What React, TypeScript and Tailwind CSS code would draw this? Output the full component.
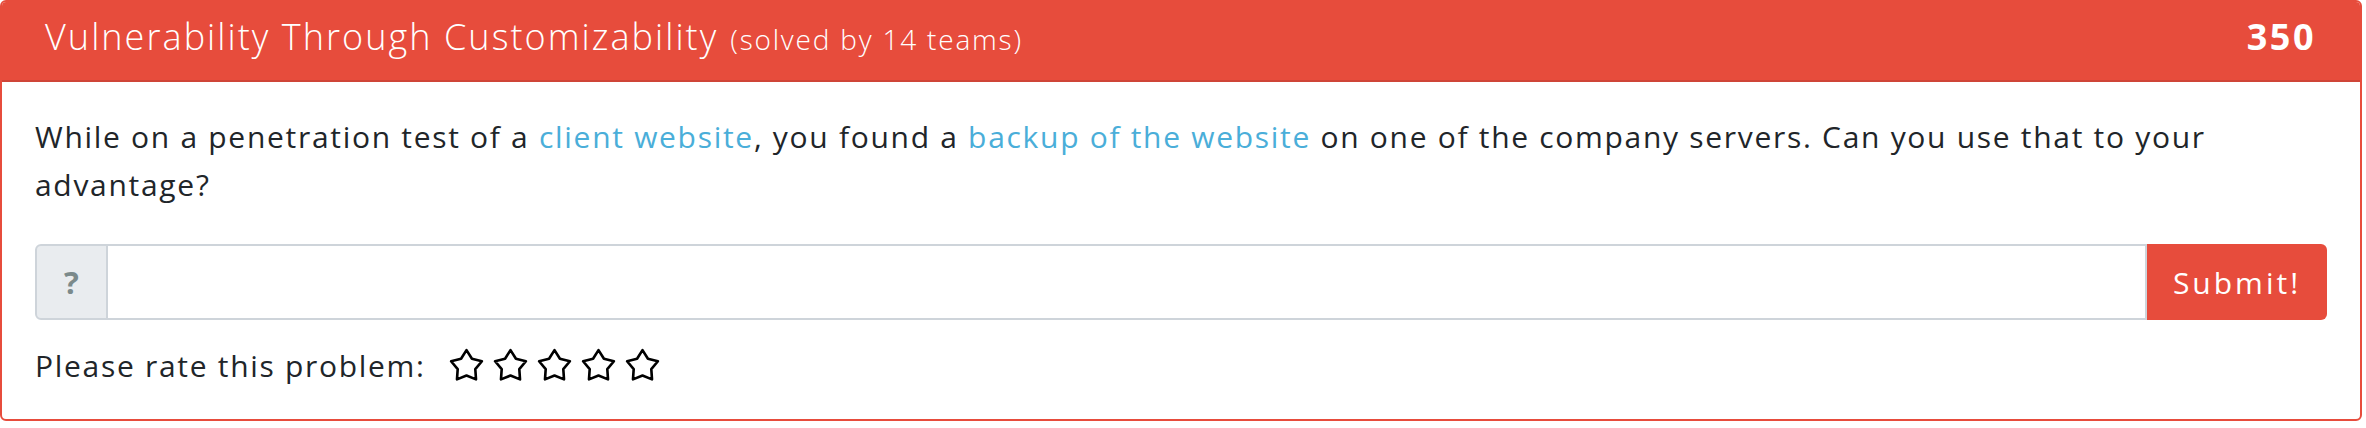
import React from "react";

function Star() {
  return (
    <svg width="37" height="37" viewBox="0 0 24 24" fill="none">
      <polygon
        points="12,2 15.53,7.65 21.99,9.26 17.71,14.35 18.17,21 12,18.5 5.83,21 6.29,14.35 2.01,9.26 8.47,7.65"
        stroke="#000"
        strokeWidth="1.7"
        strokeLinejoin="round"
      />
    </svg>
  );
}

export default function App() {
  return (
    <div className="bg-white w-[2366px] h-[428px] font-['Open_Sans',sans-serif]">
      <div className="w-[2362px] rounded-[6px] border-2 border-[#e74c3c] overflow-hidden bg-white">
        <div className="h-[80px] bg-[#e74c3c] border-b-2 border-[#cf4538] flex items-center justify-between pl-[43px] pr-[44px] pb-[9px] text-white">
          <div className="flex items-baseline">
            <span className="text-[36px] font-light tracking-[2.05px]">Vulnerability Through Customizability</span>
            <span className="text-[28px] font-light tracking-[1.8px] ml-[12px]">(solved by 14 teams)</span>
          </div>
          <span className="text-[36px] font-bold tracking-[2.5px]">350</span>
        </div>
        <div className="px-[33px] pt-[31px] pb-[30px]">
          <p className="text-[30px] leading-[48px] text-[#212529] tracking-[1.7px]">
            While on a penetration test of a{" "}
            <a className="text-[#4aaed9]">client website</a>, you found a{" "}
            <a className="text-[#4aaed9]">backup of the website</a> on one of the company servers. Can you use that to your
            <br />
            advantage?
          </p>
          <div className="mt-[35px] flex h-[76px]">
            <div className="w-[73px] flex items-center justify-center bg-[#e9ecef] border-2 border-[#ced4da] rounded-l-[6px] text-[#7b8a8b] text-[31px] font-bold">
              ?
            </div>
            <div className="flex-1 border-2 border-l-0 border-[#ced4da] bg-white"></div>
            <button className="w-[180px] bg-[#e74c3c] text-white text-[30px] tracking-[3px] rounded-r-[6px] flex items-center justify-center">
              Submit!
            </button>
          </div>
          <div className="mt-[21px] flex items-center h-[48px]">
            <span className="text-[30px] text-[#212529] tracking-[1.7px]">Please rate this problem:</span>
            <div className="flex gap-[7px] ml-[22px]">
              <Star />
              <Star />
              <Star />
              <Star />
              <Star />
            </div>
          </div>
        </div>
      </div>
    </div>
  );
}
